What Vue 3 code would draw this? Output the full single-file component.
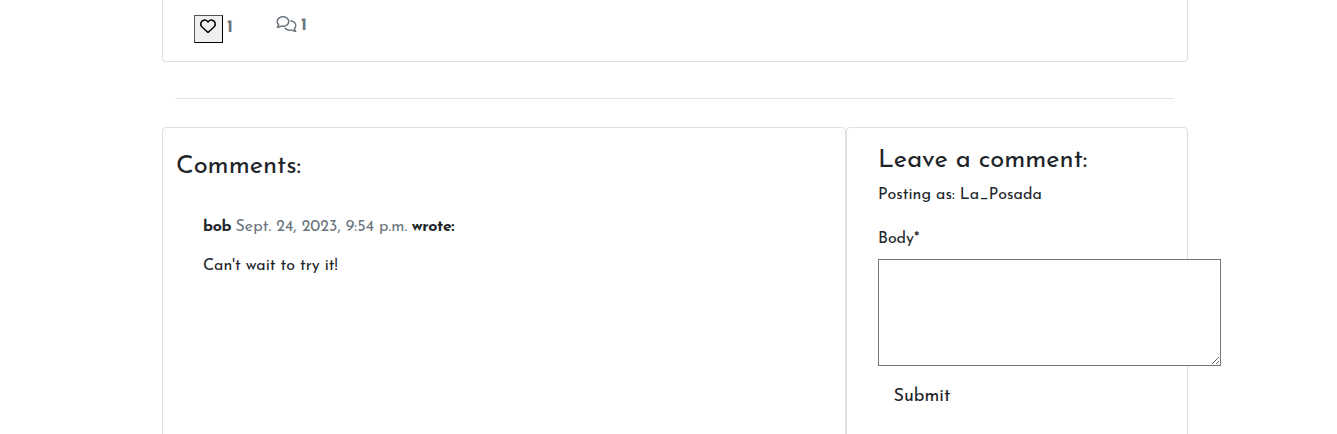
<script setup>
import { ref } from 'vue'

const likes = ref(1)
const comments = ref([
  { id: 1, author: 'bob', date: 'Sept. 24, 2023, 9:54 p.m.', text: "Can't wait to try it!" },
])
const user = 'La_Posada'
const body = ref('')
</script>

<template>
  <main class="page">
    <section class="card post">
      <button class="like" type="button" aria-label="Like">
        <svg viewBox="0 0 512 512" width="16" height="16" fill="currentColor"><path d="M225.8 468.2l-2.5-2.3L48.1 303.2C17.4 274.7 0 234.7 0 192.8v-3.3c0-70.4 50-130.8 119.2-144C158.6 37.9 198.9 47 231 69.6c9 6.4 17.4 13.8 25 22.3c4.2-4.8 8.7-9.2 13.5-13.3c3.7-3.2 7.5-6.2 11.5-9c0 0 0 0 0 0C313.1 47 353.4 37.9 392.8 45.4C462 58.6 512 119.1 512 189.5v3.3c0 41.9-17.4 81.9-48.1 110.4L288.7 465.9l-2.5 2.3c-8.2 7.6-19 11.9-30.2 11.9s-22-4.2-30.2-11.9zM239.1 145c-.4-.3-.7-.7-1-1.1l-17.8-20c0 0-.1-.1-.1-.1c0 0 0 0 0 0c-23.1-25.9-58-37.7-92-31.2C81.6 101.5 48 142.1 48 189.5v3.3c0 28.5 11.9 55.8 32.8 75.2L256 430.7 431.2 268c20.9-19.4 32.8-46.7 32.8-75.2v-3.3c0-47.3-33.6-88-80.1-96.9c-34-6.5-69 5.4-92 31.2c0 0 0 0-.1 .1s0 0-.1 .1l-17.8 20c-.3 .4-.7 .7-1 1.1c-4.5 4.5-10.6 7-16.9 7s-12.4-2.5-16.9-7z"/></svg>
      </button>
      <span class="count likes">{{ likes }}</span>
      <svg class="talk" viewBox="0 0 640 512" fill="currentColor"><path d="M88.2 309.1c9.8-18.3 6.8-40.8-7.5-55.8C59.4 230.9 48 204 48 176c0-63.5 63.8-128 160-128s160 64.5 160 128s-63.8 128-160 128c-13.1 0-25.8-1.3-37.8-3.6c-10.4-2-21.2-.6-30.7 4.2c-4.1 2.1-8.3 4.1-12.6 6c-16 7.2-32.9 13.5-49.9 18c2.8-4.6 5.4-9.1 7.9-13.6c1.1-1.9 2.2-3.9 3.2-5.9zM208 352c114.9 0 208-78.8 208-176S322.9 0 208 0S0 78.8 0 176c0 41.8 17.2 80.1 45.9 110.3c-.9 1.7-1.9 3.5-2.8 5.1c-10.3 18.4-22.3 36.5-36.6 52.1c-6.6 7-8.3 17.2-4.6 25.9C5.8 378.3 14.4 384 24 384c43 0 86.5-13.3 122.7-29.7c4.8-2.2 9.6-4.5 14.2-6.8c15.1 3 30.9 4.5 47.1 4.5zM432 480c16.2 0 31.9-1.6 47.1-4.5c4.6 2.3 9.4 4.6 14.2 6.8C529.5 498.7 573 512 616 512c9.6 0 18.2-5.7 22-14.5c3.8-8.8 2-19-4.6-25.9c-14.2-15.6-26.2-33.7-36.6-52.1c-.9-1.7-1.9-3.4-2.8-5.1C622.8 384.1 640 345.8 640 304c0-94.4-87.9-171.5-198.2-175.8c4.1 15.2 6.2 31.2 6.2 47.8l0 .6c87.2 6.7 144 67.5 144 127.4c0 28-11.4 54.9-32.7 77.2c-14.3 15-17.3 37.6-7.5 55.8c1.1 2 2.2 4 3.2 5.9c2.5 4.5 5.2 9 7.9 13.6c-17-4.5-33.9-10.7-49.9-18c-4.3-1.9-8.5-3.9-12.6-6c-9.5-4.8-20.3-6.2-30.7-4.2c-12.1 2.4-24.8 3.6-37.8 3.6c-61.7 0-110-26.5-136.8-62.3c-16 5.4-32.8 9.4-50 11.8C279 439.8 350 480 432 480z"/></svg>
      <span class="count replies">{{ comments.length }}</span>
    </section>

    <hr class="rule" />

    <div class="columns">
      <section class="card list">
        <h3 class="title">Comments:</h3>
        <article v-for="c in comments" :key="c.id" class="comment">
          <p class="meta">
            <b>{{ c.author }}</b>
            <span class="date">{{ c.date }}</span>
            <b>wrote:</b>
          </p>
          <p class="text">{{ c.text }}</p>
        </article>
      </section>

      <section class="card form">
        <h3 class="title">Leave a comment:</h3>
        <p class="posting">Posting as: {{ user }}</p>
        <label class="label" for="body">Body*</label>
        <textarea id="body" v-model="body" class="area"></textarea>
        <button class="submit" type="button">Submit</button>
      </section>
    </div>
  </main>
</template>

<style>
body {
  background: #fff;
  overflow: hidden;
}
</style>

<style scoped>
.page {
  box-sizing: border-box;
  width: 1026px;
  height: 434px;
  margin-left: 162px;
  font-family: "Josefin Sans", Lato, sans-serif;
  font-size: 16px;
  line-height: 24px;
  color: #212529;
}
.card {
  box-sizing: border-box;
  border: 1px solid #dfdfdf;
  border-radius: 4px;
}
.post {
  display: flex;
  align-items: flex-start;
  height: 62px;
  padding: 15px 31px 0;
  border-top: 0;
  border-radius: 0 0 4px 4px;
}
.like {
  box-sizing: border-box;
  width: 29px;
  height: 28px;
  padding: 2px 1px 0 0;
  border: 1px outset #000;
  background: #efefef;
  color: #000;
  line-height: 0;
  display: flex;
  justify-content: center;
  align-items: flex-start;
}
.count {
  font-size: 17.6px;
  font-weight: 700;
  color: #6c757d;
  width: 9px;
  margin-left: 4px;
}
.likes {
  margin-right: 40px;
  padding-top: 1px;
}
.replies {
  margin-top: -1px;
}
.talk {
  margin-top: 1px;
  color: #6c757d;
  width: 21px;
  height: 16px;
}
.rule {
  width: 999px;
  height: 1px;
  margin: 36px 0 28px 13px;
  border: 0;
  background: #e4e4e4;
}
.columns {
  display: flex;
  height: 307px;
}
.list {
  width: 684px;
  height: 320px;
  padding: 24px 13px 0;
}
.form {
  width: 342px;
  height: 320px;
  padding: 18px 0 0 31px;
  display: flex;
  flex-direction: column;
  align-items: flex-start;
}
.title {
  margin: 0;
  font-size: 25.6px;
  font-weight: 400;
  line-height: 30px;
  letter-spacing: -0.05px;
  white-space: nowrap;
}
.comment {
  padding: 33px 27px 0;
}
.meta,
.text,
.posting {
  margin: 0;
  white-space: nowrap;
}
.meta {
  display: flex;
  gap: 4.5px;
}
.meta b {
  font-weight: 700;
  letter-spacing: -0.35px;
}
.date {
  color: #6c757d;
}
.text {
  margin-top: 15px;
}
.posting {
  margin-top: 7px;
}
.label {
  margin-top: 20px;
}
.area {
  box-sizing: border-box;
  flex: none;
  width: 343px;
  height: 107px;
  margin-top: 8px;
  border: 1px solid #767676;
  border-radius: 0;
  background: #fff;
  resize: both;
}
.submit {
  margin: 18px 0 0 15.5px;
  padding: 0;
  border: 0;
  background: none;
  font-family: inherit;
  font-size: 18px;
  line-height: 26px;
  color: #212529;
}
</style>
